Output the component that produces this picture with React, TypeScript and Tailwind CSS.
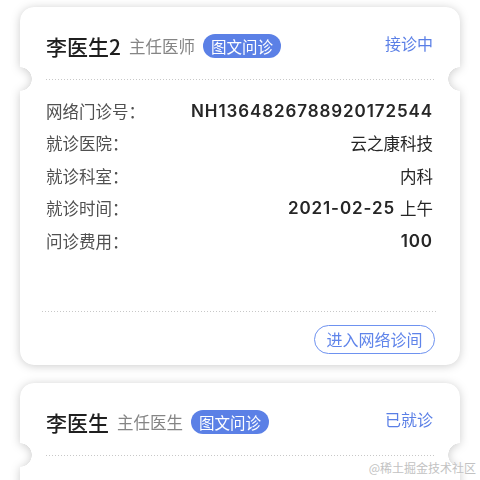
import type { ReactNode } from 'react';

type Row = { label: string; value: string; num?: string };

const rows: Row[] = [
  { label: '网络门诊号：', value: '', num: 'NH1364826788920172544' },
  { label: '就诊医院：', value: '云之康科技' },
  { label: '就诊科室：', value: '内科' },
  { label: '就诊时间：', value: '上午', num: '2021-02-25' },
  { label: '问诊费用：', value: '', num: '100' }
];

const cjk = "font-['Noto_Sans_CJK_SC',sans-serif]";
const num = "font-['Inter','Noto_Sans_CJK_SC',sans-serif]";

function Dots({ className = '' }: { className?: string }) {
  return (
    <div
      className={`h-px bg-[linear-gradient(to_right,#c8c8c8_1px,transparent_1px)] bg-[length:3px_1px] ${className}`}
    />
  );
}

function Ticket({
  name,
  title,
  status,
  children
}: {
  name: string;
  title: string;
  status: string;
  children?: ReactNode;
}) {
  return (
    <div className="drop-shadow-[0_1px_5px_rgba(0,0,0,0.2)]">
      <div className="bg-white rounded-[14px] [mask-image:radial-gradient(circle_at_0_72px,transparent_11.5px,#000_12px),radial-gradient(circle_at_100%_72px,transparent_11.5px,#000_12px)] [mask-composite:intersect]">
        <div className="flex items-start justify-between h-[72px] pl-[26px] pr-[27px] pt-[26px]">
          <div className="flex items-center h-[26px]">
            <span className={`${cjk} text-[21px] leading-[26px] font-medium text-[#1f1f1f]`}>{name}</span>
            <span className={`${cjk} ml-[8px] text-[16.5px] leading-[24px] text-[#858585]`}>{title}</span>
            <span
              className={`${cjk} ml-[8px] h-[24px] px-[8px] rounded-full bg-[#5b80e6] text-white text-[15.5px] leading-[24px]`}
            >
              图文问诊
            </span>
          </div>
          <span className={`${cjk} text-[16px] leading-[20px] text-[#5a7fe6]`}>{status}</span>
        </div>
        <Dots className="mx-[26px]" />
        {children}
      </div>
    </div>
  );
}

function Body() {
  return (
    <>
      <div className="pl-[26px] pr-[27px] pt-[15px] pb-[53px]">
        {rows.map((r) => (
          <div key={r.label} className="h-[32.5px] flex items-center justify-between">
            <span className={`${cjk} text-[16.5px] text-[#505050]`}>{r.label}</span>
            <span className="flex items-center gap-[5px] text-[#262626]">
              {r.num && (
                <span className={`${num} text-[17px] font-semibold tracking-[0.9px]`}>{r.num}</span>
              )}
              {r.value && <span className={`${cjk} text-[16.5px]`}>{r.value}</span>}
            </span>
          </div>
        ))}
      </div>
      <Dots className="mx-[22px]" />
      <div className="flex justify-end pr-[25px] pt-[13px] pb-[11px]">
        <button
          type="button"
          className={`${cjk} h-[29px] w-[121px] rounded-full border border-[#6e92f0] text-[#5f84ea] text-[16px] leading-none`}
        >
          进入网络诊间
        </button>
      </div>
    </>
  );
}

export default function App() {
  return (
    <div className="relative w-[480px] h-[480px] overflow-hidden bg-white">
      <div className="flex flex-col gap-[18px] px-[20px] pt-[7px]">
        <Ticket name="李医生2" title="主任医师" status="接诊中">
          <Body />
        </Ticket>
        <Ticket name="李医生" title="主任医生" status="已就诊">
          {/* rest of the second card lies below the fold */}
          <div className="h-[120px]" />
        </Ticket>
      </div>
      <span
        className={`${cjk} absolute right-[4px] bottom-[3px] text-[12px] text-[#c2c2c2] [text-shadow:0_0_2px_#fff]`}
      >
        @稀土掘金技术社区
      </span>
    </div>
  );
}
